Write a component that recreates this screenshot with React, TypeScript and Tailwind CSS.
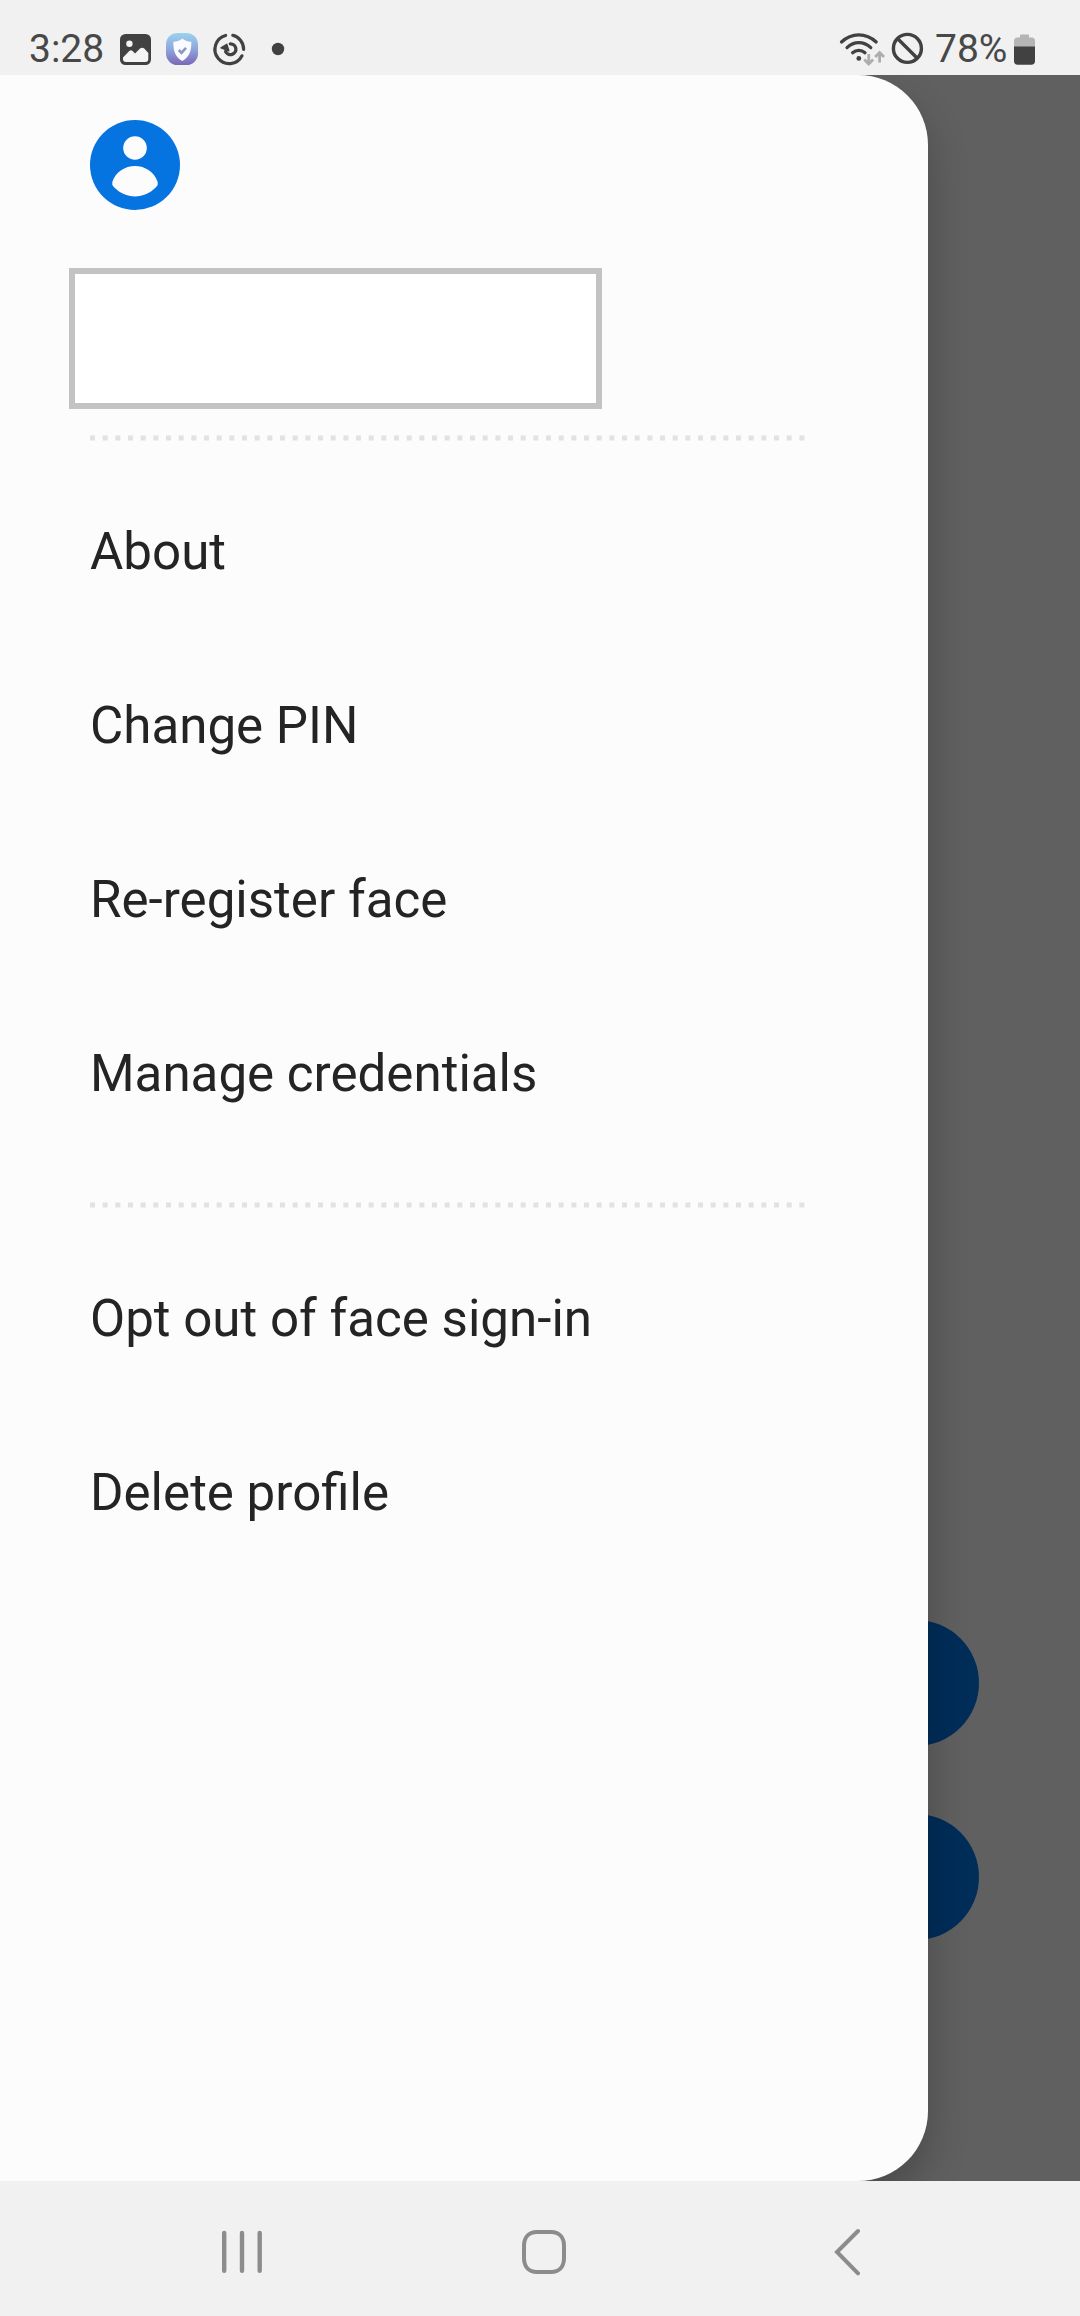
const accountItems = ["About", "Change PIN", "Re-register face", "Manage credentials"];
const profileItems = ["Opt out of face sign-in", "Delete profile"];

function NotificationIcons() {
  return (
    <svg className="ml-[17px] h-9 w-[166px]" viewBox="119 31 166 36" fill="none">
      <defs>
        <linearGradient id="shieldTile" x1="0" y1="0" x2="0" y2="1">
          <stop offset="0" stopColor="#9bd3ec" />
          <stop offset="0.5" stopColor="#8ea6dc" />
          <stop offset="1" stopColor="#7c66b8" />
        </linearGradient>
      </defs>
      <rect x="120" y="34" width="31" height="31" rx="5.5" fill="#414141" />
      <circle cx="129.4" cy="43.7" r="3.2" fill="#f4f4f4" />
      <path d="M123 57.5 L129.3 51 Q131 49.4 132.6 51 L135 53.6 L140 48.6 Q142.3 46.6 144.5 48.8 L148.3 53 V59 Q148.3 62 145.3 62 H126 Q123 62 123 59 Z" fill="#f4f4f4" />
      <rect x="166" y="33" width="32" height="32" rx="11.5" fill="url(#shieldTile)" />
      <path d="M182.3 38.5 C185 40.8 188 41.6 191.3 41.8 C191.7 51 189 57.5 182.3 61 C175.6 57.5 173 51 173.4 41.8 C176.6 41.6 179.6 40.8 182.3 38.5 Z" fill="#fafaff" />
      <path d="M178.8 50 L181.5 52.8 L186 47.8" stroke="#8797c6" strokeWidth="2.6" />
      <g stroke="#414141" strokeWidth="3.2" strokeLinecap="round">
        <path d="M232.8 35.3 A14.3 14.3 0 0 1 243.6 49.4" />
        <path d="M242 55.8 A14.3 14.3 0 1 1 225.600 35.500" />
        <path d="M230.300 43.800 A5.400 5.400 0 1 1 225.600 51.500" strokeWidth="3.3" />
      </g>
      <path d="M221 47.800 L226.800 44.400 L228.800 50.800 Z" fill="#414141" stroke="#414141" strokeWidth="1.500" strokeLinejoin="round" />
      <circle cx="278" cy="49" r="6.2" fill="#414141" />
    </svg>
  );
}

function SignalIcons() {
  return (
    <svg className="h-9 w-[86px]" viewBox="839 31 86 36" fill="none">
      <g stroke="#414141" strokeWidth="3.2" strokeLinecap="round">
        <path d="M841.5 42 Q849 34.8 858.8 34.8 T876.2 42" />
        <path d="M847 47.6 Q852.3 42.6 858.8 42.6 T870.8 47.6" />
        <path d="M852.6 52.8 Q855.3 50.4 858.8 50.4 T865 52.8" />
      </g>
      <circle cx="858.8" cy="58.4" r="2.4" fill="#414141" />
      <g stroke="#adadad" strokeWidth="2.8">
        <path d="M868.7 54 V64 M864.3 59.6 L868.7 64 L873.1 59.6" />
        <path d="M879.6 62.6 V52.6 M875.2 57 L879.6 52.6 L884 57" />
      </g>
      <g stroke="#414141" strokeWidth="3.4">
        <circle cx="907.4" cy="48.4" r="14" />
        <path d="M897.5 38.5 L917.3 58.3" />
      </g>
    </svg>
  );
}

function BatteryIcon() {
  return (
    <svg className="ml-[7px] h-[31px] w-[21px]" viewBox="0 0 21 31">
      <path d="M6 3.5 V1.5 Q6 .5 7 .5 H14 Q15 .5 15 1.5 V3.5 H17.5 Q21 3.5 21 7 V13 H0 V7 Q0 3.5 3.5 3.5 Z" fill="#b5b5b5" />
      <path d="M0 12.5 H21 V27 Q21 30.7 17.3 30.7 H3.7 Q0 30.7 0 27 Z" fill="#414141" />
    </svg>
  );
}

function StatusBar() {
  return (
    <header className="flex h-[75px] items-start bg-[#f1f1f1] pt-[31px] text-[39px] leading-9 text-[#484848]">
      <span className="ml-[29px] w-[73px] whitespace-nowrap">3:28</span>
      <NotificationIcons />
      <div className="ml-auto mr-[45px] flex items-start">
        <SignalIcons />
        <span className="ml-[10px] w-[72px] whitespace-nowrap">78%</span>
        <div className="pt-[2.5px]">
          <BatteryIcon />
        </div>
      </div>
    </header>
  );
}

function Avatar() {
  return (
    <svg className="ml-[90px] size-[90px]" viewBox="0 0 90 90">
      <circle cx="45" cy="45" r="45" fill="#0573e0" />
      <circle cx="45" cy="28" r="11.8" fill="#fcfcfc" />
      <path d="M22.3 62 C25.5 52 35 46 45 46 C55 46 64.5 52 67.7 62 Q68.5 65 66 67.3 C60 73.3 53 76.5 45 76.5 C37 76.5 30 73.3 24 67.3 Q21.5 65 22.3 62 Z" fill="#fcfcfc" />
    </svg>
  );
}

function DottedDivider() {
  return (
    <svg className="ml-[90px] h-[6px] w-[715px]" viewBox="0 0 715 6">
      <line x1="0" y1="3" x2="715" y2="3" stroke="#e2e2e2" strokeWidth="5" strokeDasharray="5 7.667" />
    </svg>
  );
}

function MenuList({ items }: { items: string[] }) {
  return (
    <ul className="pl-[90px] text-[51.1px] text-[#242424]">
      {items.map((item) => (
        <li key={item} className="h-[174px] leading-[174px] whitespace-nowrap">
          {item}
        </li>
      ))}
    </ul>
  );
}

function Drawer() {
  return (
    <nav className="relative flex h-full w-[928px] flex-col rounded-r-[70px] bg-[#fcfcfc] pt-[45px] shadow-[0_20px_40px_rgba(0,0,0,0.24)]">
      <Avatar />
      <div className="mt-[58px] ml-[69px] h-[141px] w-[533px] border-6 border-[#c3c3c3] bg-white" />
      <div className="mt-[26px] flex">
        <DottedDivider />
      </div>
      <div className="mt-6">
        <MenuList items={accountItems} />
      </div>
      <div className="mt-[41px] flex">
        <DottedDivider />
      </div>
      <div className="mt-6">
        <MenuList items={profileItems} />
      </div>
    </nav>
  );
}

function NavigationBar() {
  return (
    <footer className="flex h-[135px] items-start bg-[#f1f1f1] pt-[47px] text-[#8c8c8c]">
      <svg className="ml-[220px] h-12 w-11" viewBox="220 2228 44 48" stroke="currentColor" strokeWidth="4.4" strokeLinecap="round">
        <path d="M224.2 2233 V2270.8 M242 2233 V2270.8 M259.7 2233 V2270.8" />
      </svg>
      <svg className="ml-[256px] h-12 w-12" viewBox="520 2228 48 48" fill="none" stroke="currentColor" strokeWidth="4">
        <path d="M537 2232 H551 C560 2232 564 2238 564 2246 V2258 C564 2266 560 2272 551 2272 H537 C528 2272 524 2266 524 2258 V2246 C524 2238 528 2232 537 2232 Z" />
      </svg>
      <svg className="ml-[264px] h-12 w-8" viewBox="832 2228 32 48" fill="none" stroke="currentColor" strokeWidth="4" strokeLinecap="round">
        <path d="M858 2231 L837 2252 L858 2273.3" />
      </svg>
    </footer>
  );
}

export default function App() {
  return (
    <div className="flex h-[2316px] w-[1080px] flex-col overflow-hidden font-[Roboto,sans-serif]">
      <StatusBar />
      <main className="relative h-[2106px] overflow-hidden bg-[#606060]">
        <div className="absolute inset-x-[101px] top-[1545px] flex flex-col gap-[68px]">
          <div className="h-[126px] rounded-full bg-[#012d59]" />
          <div className="h-[126px] rounded-full bg-[#012d59]" />
        </div>
        <Drawer />
      </main>
      <NavigationBar />
    </div>
  );
}
